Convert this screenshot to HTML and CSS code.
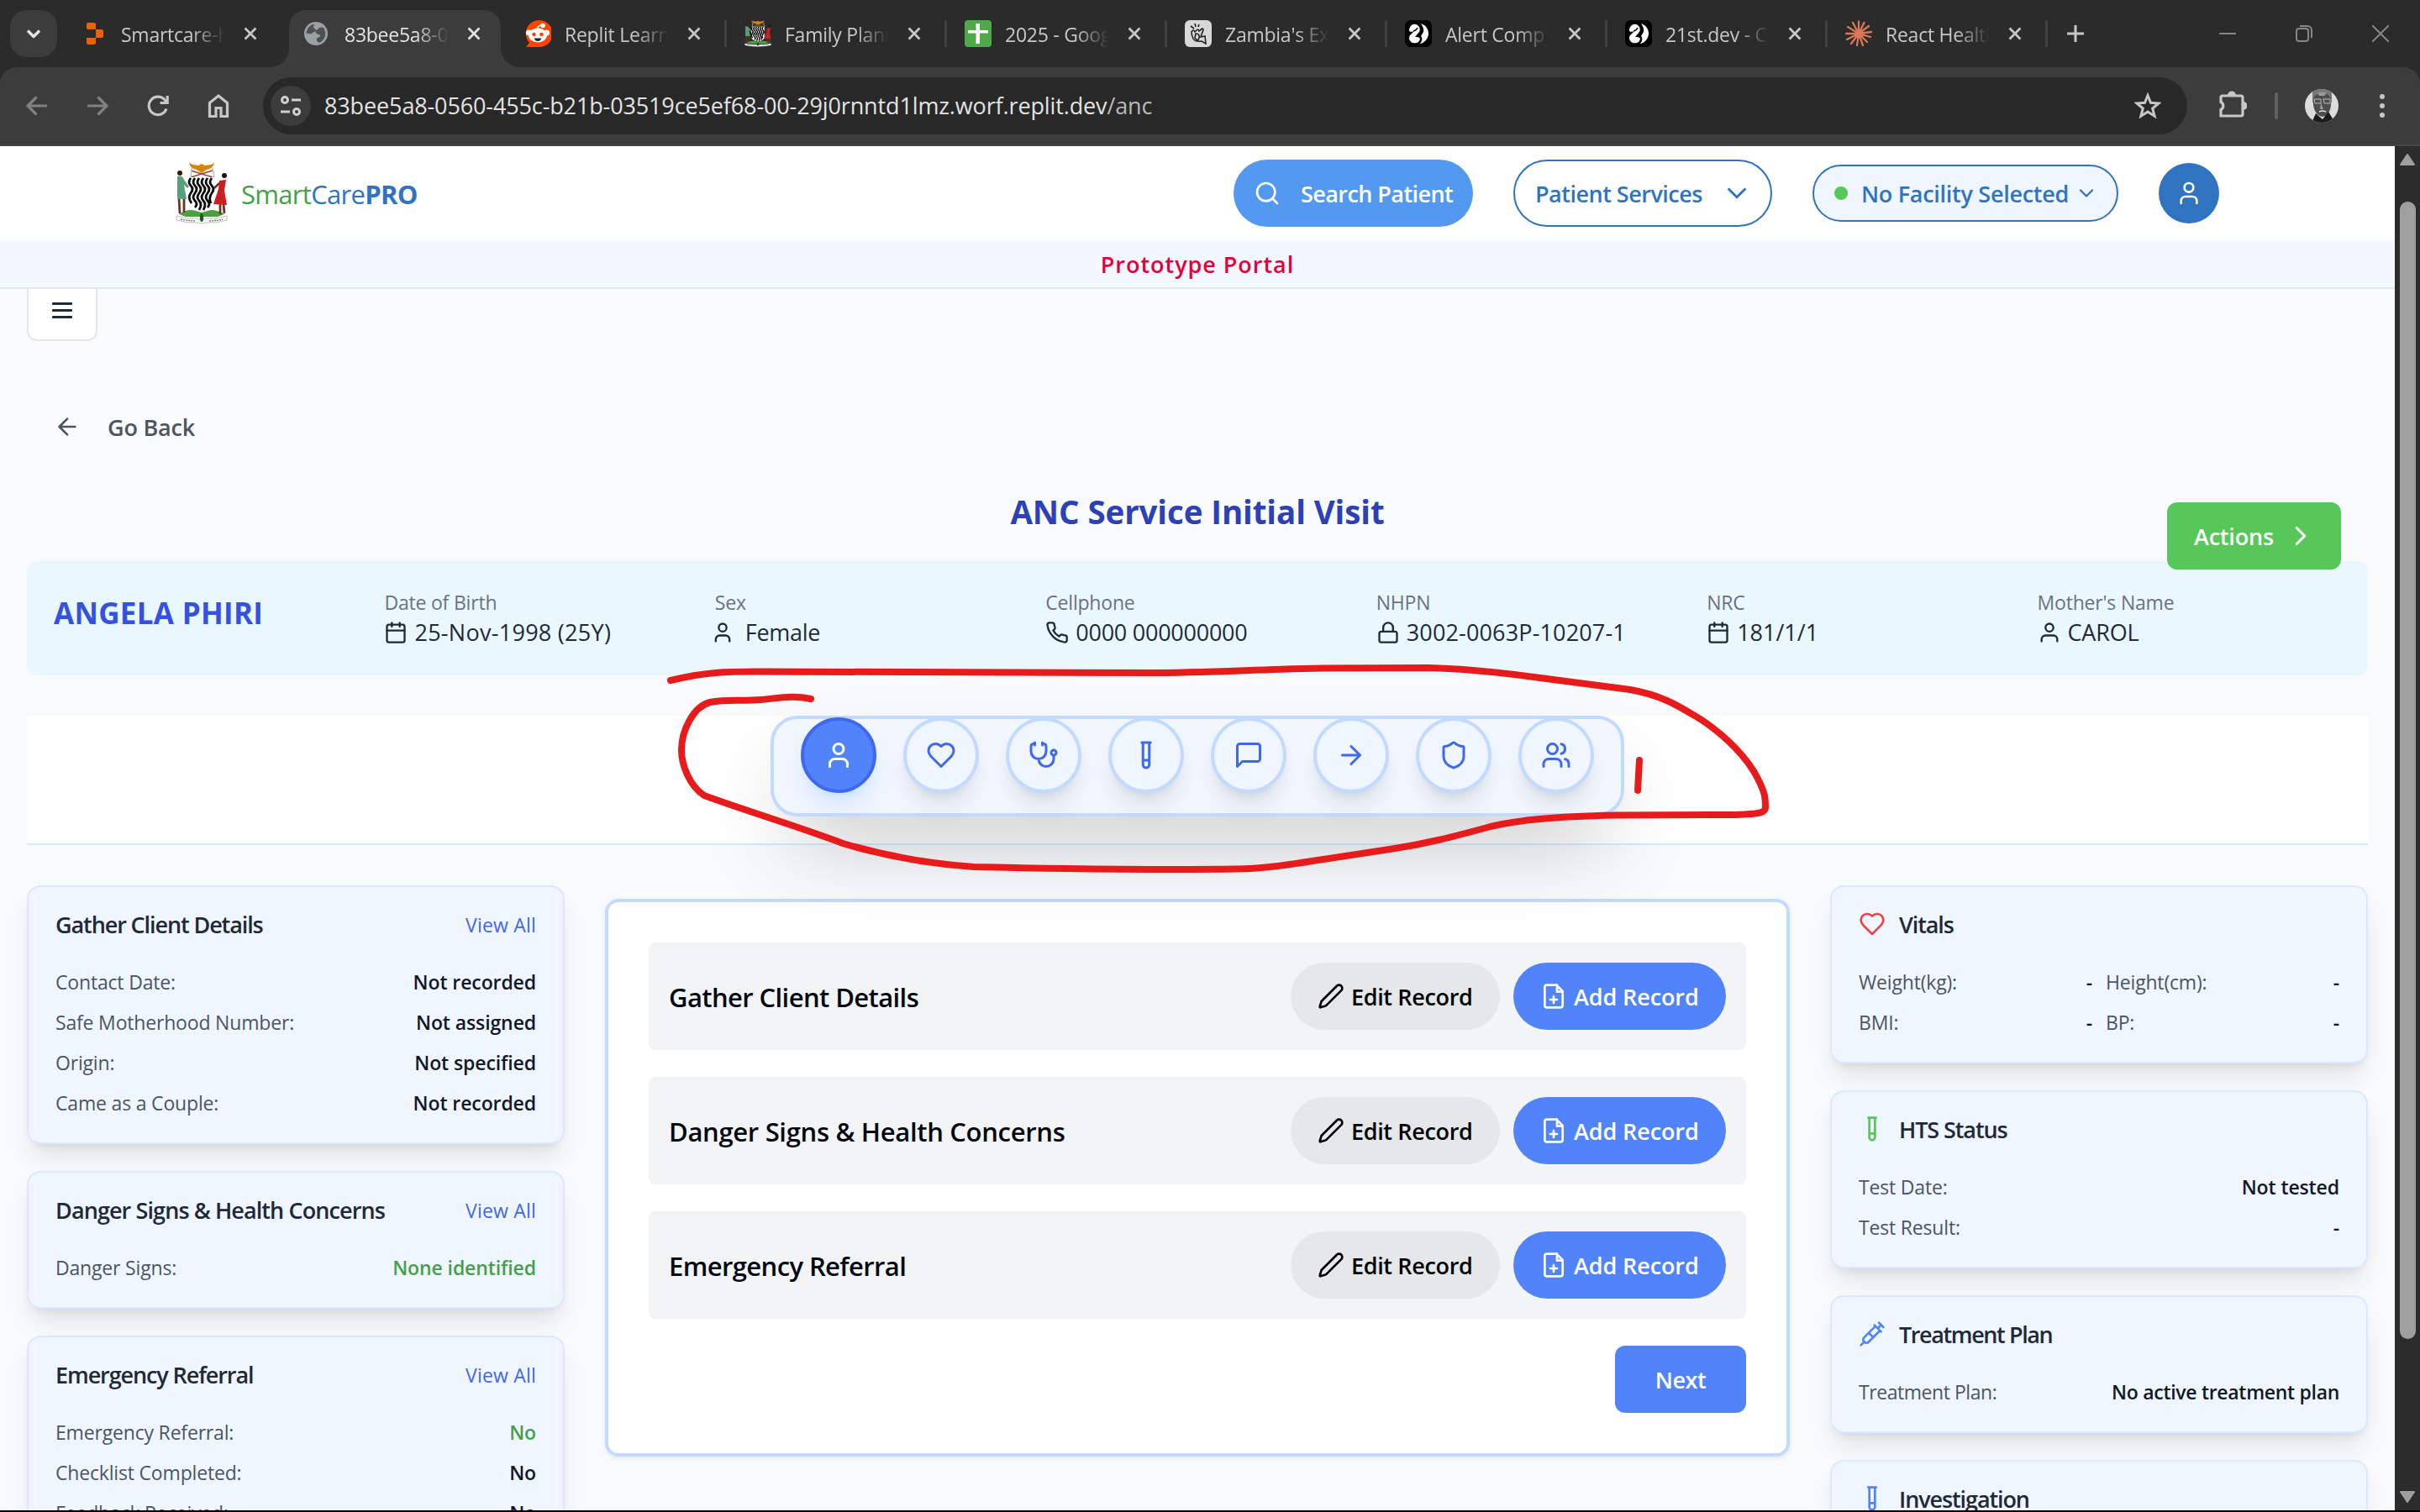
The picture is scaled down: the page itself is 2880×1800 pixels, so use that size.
FILE: index.html
```html
<!DOCTYPE html>
<html lang="en">
<head>
<meta charset="utf-8">
<title>SmartCarePRO – ANC Service</title>
<link rel="stylesheet" href="styles.css">
</head>
<body>
<svg class="defs" width="0" height="0" aria-hidden="true">
  <defs>
    <symbol id="x" viewBox="0 0 24 24"><path d="M5 5l14 14M19 5L5 19"/></symbol>
    <symbol id="user" viewBox="0 0 24 24"><path d="M19 21v-2a4 4 0 0 0-4-4H9a4 4 0 0 0-4 4v2"/><circle cx="12" cy="7" r="4"/></symbol>
    <symbol id="user-wide" viewBox="0 0 24 24"><path d="M20 21v-2a4 4 0 0 0-4-4H8a4 4 0 0 0-4 4v2"/><circle cx="12" cy="7" r="4"/></symbol>
    <symbol id="heart" viewBox="0 0 24 24"><path d="M19 14c1.49-1.46 3-3.21 3-5.5A5.5 5.5 0 0 0 16.5 3c-1.76 0-3 .5-4.5 2-1.5-1.5-2.74-2-4.5-2A5.5 5.5 0 0 0 2 8.5c0 2.3 1.5 4.05 3 5.5l7 7Z"/></symbol>
    <symbol id="stethoscope" viewBox="0 0 24 24"><path d="M11 2v2M5 2v2M5 3H4a2 2 0 0 0-2 2v4a6 6 0 0 0 12 0V5a2 2 0 0 0-2-2h-1M8 15a6 6 0 0 0 12 0v-3"/><circle cx="20" cy="10" r="2"/></symbol>
    <symbol id="tube" viewBox="0 0 24 24"><path d="M14.5 2v17.5c0 1.4-1.1 2.5-2.5 2.5s-2.5-1.1-2.5-2.5V2M8.5 2h7M14.5 16h-5"/></symbol>
    <symbol id="message" viewBox="0 0 24 24"><path d="M21 15a2 2 0 0 1-2 2H7l-4 4V5a2 2 0 0 1 2-2h14a2 2 0 0 1 2 2z"/></symbol>
    <symbol id="arrow-right" viewBox="0 0 24 24"><path d="M5 12h14M12 5l7 7-7 7"/></symbol>
    <symbol id="arrow-left" viewBox="0 0 24 24"><path d="M19 12H5M12 19l-7-7 7-7"/></symbol>
    <symbol id="shield" viewBox="0 0 24 24"><path d="M20 13c0 5-3.5 7.5-7.66 8.95a1 1 0 0 1-.67-.01C7.5 20.5 4 18 4 13V6a1 1 0 0 1 1-1c2 0 4.5-1.2 6.24-2.72a1.17 1.17 0 0 1 1.52 0C14.51 3.81 17 5 19 5a1 1 0 0 1 1 1z"/></symbol>
    <symbol id="users" viewBox="0 0 24 24"><path d="M16 21v-2a4 4 0 0 0-4-4H6a4 4 0 0 0-4 4v2M22 21v-2a4 4 0 0 0-3-3.87M16 3.13a4 4 0 0 1 0 7.75"/><circle cx="9" cy="7" r="4"/></symbol>
    <symbol id="calendar" viewBox="0 0 24 24"><rect x="3" y="4" width="18" height="18" rx="2"/><path d="M8 2v4M16 2v4M3 10h18"/></symbol>
    <symbol id="lock" viewBox="0 0 24 24"><rect x="3" y="11" width="18" height="11" rx="2"/><path d="M7 11V7a5 5 0 0 1 10 0v4"/></symbol>
    <symbol id="phone" viewBox="0 0 24 24"><path d="M22 16.92v3a2 2 0 0 1-2.18 2 19.79 19.79 0 0 1-8.63-3.07 19.5 19.5 0 0 1-6-6 19.79 19.79 0 0 1-3.07-8.67A2 2 0 0 1 4.11 2h3a2 2 0 0 1 2 1.72 12.84 12.84 0 0 0 .7 2.81 2 2 0 0 1-.45 2.11L8.09 9.91a16 16 0 0 0 6 6l1.27-1.27a2 2 0 0 1 2.11-.45 12.84 12.84 0 0 0 2.81.7A2 2 0 0 1 22 16.92z"/></symbol>
    <symbol id="pen" viewBox="0 0 24 24"><path d="M21.174 6.812a1 1 0 0 0-3.986-3.987L3.842 16.174a2 2 0 0 0-.5.83l-1.321 4.352a.5.5 0 0 0 .623.622l4.353-1.32a2 2 0 0 0 .83-.497z"/></symbol>
    <symbol id="file-plus" viewBox="0 0 24 24"><path d="M14.5 2H6a2 2 0 0 0-2 2v16a2 2 0 0 0 2 2h12a2 2 0 0 0 2-2V7.500Z"/><path d="M15 2v6h5M9 15h6M12 12v6"/></symbol>
    <symbol id="syringe" viewBox="0 0 24 24"><path d="m18 2 4 4M17 7l3-3M19 9 8.700 19.300c-1 1-2.500 1-3.400 0l-.6-.6c-1-1-1-2.500 0-3.400L15 5M9 11l4 4M5 19l-3 3M14 4l6 6"/></symbol>
    <symbol id="chevron-down" viewBox="0 0 24 24"><path d="m6 9 6 6 6-6"/></symbol>
    <symbol id="chevron-right" viewBox="0 0 24 24"><path d="m9 18 6-6-6-6"/></symbol>
    <symbol id="search" viewBox="0 0 24 24"><circle cx="11" cy="11" r="8"/><path d="m21 21-4.300-4.300"/></symbol>
    <symbol id="arms" viewBox="0 0 62 74">
      <path d="M16 0c3 4 8 3 11 4l4-2 4 2c4-1 8 0 11-4-1 6-4 8-9 9l-6 4-6-4C20 8 17 6 16 0z" fill="#d9860f"/>
      <path d="M18 10l26 8M44 10l-26 8" stroke="#8a4b3a" stroke-width="1.600"/><path d="M19 7l-1 12M44 7l2 12" stroke="#b9bec6" stroke-width="1.400"/>
      <path d="M16 18h30v28c0 8-8 11-15 13-7-2-15-5-15-13z" fill="#fff"/>
      <path d="M18 19q-4 5 0 9t0 9 1 12M23 19q-4 5 0 9t0 9 0 9 0 8M28 19q-4 5 0 9t0 9 0 9 0 11M33 19q-4 5 0 9t0 9 0 9 0 11M38 19q-4 5 0 9t0 9 0 9 0 8M43 19q-4 5 0 9t0 9-1 12" stroke="#0a0a0a" stroke-width="2.800" fill="none"/>
      <path d="M4 62q10-7 20-4l7 2 7-2q10-3 20 4l-8 3H12z" fill="#4b9f3f"/>
      <circle cx="5" cy="13" r="3" fill="#3a1a12"/><path d="M4 43l1 18M10 43v17" stroke="#6b3526" stroke-width="2.800"/><path d="M2 17q6-2 8 4l6 8-2 2-4-4 3 17H2z" fill="#58a07c"/>
      <circle cx="58" cy="16" r="3" fill="#2a110c"/><path d="M53 50v12M57 50l1 11" stroke="#6b3526" stroke-width="2.800"/><path d="M52 22l8-1-2 13 3 17-16-1 6-18z" fill="#cc1f22"/><path d="M52 25l-6 6" stroke="#6b3526" stroke-width="2.500"/>
      <path d="M1 64q12 4 24 3l6 2 6-2q12 1 24-3v5q-12 4-24 3l-6 1-6-1Q13 73 1 69z" fill="#fafafa" stroke="#999" stroke-width=".6"/>
      <path d="M6 68q10 2 17 2M40 70q8 0 16-2" stroke="#777" stroke-width="1.300" stroke-dasharray="2 1" fill="none"/><ellipse cx="31" cy="66" rx="2.200" ry="5" fill="#1e5a25"/>
    </symbol>
    <symbol id="globe" viewBox="0 0 28 28"><circle cx="14" cy="14" r="14" fill="#9aa0a6"/><path d="M13 2.500c-3 2-2 5 0 6s1 3-1 3.500-3 3-6 2l-3.500-.500A11.500 11.500 0 0 1 13 2.500zM16 9c2-3 5-3 7-2a12 12 0 0 1-5 18c-2-1-4-3-3-5s3-1 4-3-4-2-5-4 0-3 2-4z" fill="#3c3c3c" opacity=".8"/></symbol>
    <symbol id="component" viewBox="0 0 32 32"><rect width="32" height="32" rx="7" fill="#000"/><path d="M5 13C5 7 9 4 13 5s6 6 4 9l-5 6c2 0 5 0 6 2-1 5-5 6-9 5-4-2-5-6-3-9l5-5c-2 1-5 1-6 0zM19 4c6 2 9 7 9 12s-4 11-10 12c3-4 3-7 1-9l3-5c1-3-1-7-3-10z" fill="#fff"/><path d="M10 13q4-1 5-4M18 5q4 5 2 10l-3 4" stroke="#000" stroke-width="1.300" fill="none"/></symbol>
  </defs>
</svg>

<header class="browser">
  <div class="tabstrip">
    <button class="tab-search"><svg class="line"><use href="#chevron-down"/></svg></button>
    <div class="tabs">
      <div class="tab first"><svg class="fav" viewBox="0 0 32 32"><path d="M3 5a2 2 0 0 1 2-2h7a2 2 0 0 1 2 2v6H5a2 2 0 0 1-2-2zM14 11h7a2 2 0 0 1 2 2v6a2 2 0 0 1-2 2h-7zM3 21h11v6a2 2 0 0 1-2 2H5a2 2 0 0 1-2-2z" fill="#ee6006"/></svg><span class="tab-title">Smartcare-h</span><svg class="line close"><use href="#x"/></svg></div>
      <div class="tab active"><svg class="fav globe"><use href="#globe"/></svg><span class="tab-title">83bee5a8-05</span><svg class="line close"><use href="#x"/></svg></div>
      <div class="tab sep"><svg class="fav" viewBox="0 0 32 32"><path d="M2 32l4-5A16 16 0 1 1 16 32z" fill="#ff4500"/><circle cx="5.500" cy="15" r="3.500" fill="#fff"/><circle cx="26.500" cy="15" r="3.500" fill="#fff"/><ellipse cx="16" cy="18" rx="11" ry="8.500" fill="#fff"/><circle cx="22" cy="6.500" r="2.800" fill="#fff"/><path d="M16 10q0-4 5-4" stroke="#fff" stroke-width="1.500" fill="none"/><circle cx="11.500" cy="17" r="2.300" fill="#ff4500"/><circle cx="20.500" cy="17" r="2.300" fill="#ff4500"/><path d="M11.500 21.500h9q-1.500 3.500-4.500 3.500t-4.500-3.500z" fill="#222"/></svg><span class="tab-title">Replit Learn</span><svg class="line close"><use href="#x"/></svg></div>
      <div class="tab sep"><svg class="fav" preserveAspectRatio="none" viewBox="0 0 62 74"><use href="#arms" width="62" height="74"/></svg><span class="tab-title">Family Plann</span><svg class="line close"><use href="#x"/></svg></div>
      <div class="tab sep"><svg class="fav" viewBox="0 0 32 32"><rect width="32" height="32" rx="4" fill="#4fa84a"/><path d="M13.500 4h4.500v24h-4.500zM4 12h24v3.500H4z" fill="#fff"/></svg><span class="tab-title">2025 - Goog</span><svg class="line close"><use href="#x"/></svg></div>
      <div class="tab sep"><svg class="fav" viewBox="0 0 32 32"><rect width="32" height="32" rx="6" fill="#d8d8d8"/><path d="M7 7l4 3M12 4l1 4M17 5l-1 3M8 14q2-4 4 0l2-2q2-2 3 1l4-3q2 1 0 4l-2 6 5-1 1 9-5-3q-8 1-10-3t-2-8zM13 16q5 0 4 5t-5 0z" stroke="#222" stroke-width="1.600" fill="none"/></svg><span class="tab-title">Zambia's Exp</span><svg class="line close"><use href="#x"/></svg></div>
      <div class="tab sep"><svg class="fav"><use href="#component"/></svg><span class="tab-title">Alert Comp</span><svg class="line close"><use href="#x"/></svg></div>
      <div class="tab sep"><svg class="fav"><use href="#component"/></svg><span class="tab-title">21st.dev - C</span><svg class="line close"><use href="#x"/></svg></div>
      <div class="tab sep"><svg class="fav" viewBox="0 0 32 32"><path d="M16 16V1.500M16 16l6.500-13M16 16l12-9M16 16l15-2M16 16l14 4M16 16l10 10M16 16l5 14M16 16l-2 14M16 16L7 28M16 16L2 23M16 16L1 16M16 16L3 8M16 16L9 3" stroke="#d97757" stroke-width="2.300" stroke-linecap="round"/></svg><span class="tab-title">React Health</span><svg class="line close"><use href="#x"/></svg></div>
    </div>
    <svg class="new-tab" viewBox="0 0 22 22"><path d="M11 1v20M1 11h20"/></svg>
    <div class="window-controls">
      <svg viewBox="0 0 20 20"><path d="M0 10h20"/></svg>
      <svg viewBox="0 0 20 20"><rect x="1" y="4" width="14" height="15" rx="3"/><path d="M5 1h9a5 5 0 0 1 5 5v9"/></svg>
      <svg viewBox="0 0 20 20"><path d="M0 0l20 20M20 0L0 20"/></svg>
    </div>
  </div>
  <div class="toolbar">
    <div class="nav-icons">
      <svg class="dim" viewBox="0 0 32 32"><path d="M28 16H5M15.500 5.500L5 16l10.500 10.500"/></svg>
      <svg class="dim" viewBox="0 0 32 32"><path d="M4 16h23M16.500 5.500L27 16 16.500 26.500"/></svg>
      <svg viewBox="0 0 32 32"><path d="M26 19.500A10.700 10.700 0 1 1 24.500 9.500L27 12M27.200 4v8.500h-8.700"/></svg>
      <svg viewBox="0 0 32 32"><path d="M5.500 12.500L16 4l10.500 8.500V28.500h-7.500v-10h-6v10H5.500z"/></svg>
    </div>
    <div class="omnibox">
      <span class="site-info"><svg viewBox="0 0 26 26"><circle cx="6" cy="6" r="3.500"/><path d="M14 6h11M1 20h11"/><circle cx="20" cy="20" r="3.500"/></svg></span>
      <span class="url">83bee5a8-0560-455c-b21b-03519ce5ef68-00-29j0rnntd1lmz.worf.replit.dev<span class="path">/anc</span></span>
      <svg class="star" viewBox="0 0 32 32"><path d="M16 3.500l3.500 8.800 9.500.7-7.300 6 2.400 9.200L16 23l-8.100 5.200L10.300 19 3 13l9.500-.7z"/></svg>
    </div>
    <svg class="ext" viewBox="0 0 34 34"><path d="M3 8a2 2 0 0 1 2-2h22a2 2 0 0 1 2 2v20a2 2 0 0 1-2 2H3v-7.500a5 5 0 0 0 0-9z"/><path d="M12.500 5.500a3.500 3.500 0 0 1 7 0zM29.500 14.500a3.500 3.500 0 0 1 0 7z" fill="#c7c7c7"/></svg>
    <span class="tool-sep"></span>
    <svg class="profile" viewBox="0 0 40 40"><clipPath id="disc"><circle cx="20" cy="20" r="20"/></clipPath><g clip-path="url(#disc)"><path d="M0 0h40v40H0z" fill="#dcdcdc"/><path d="M9 0h23v16H9z" fill="#777"/><path d="M10 13C10 3 30 1 31 13c1 11-3 19-10 20-7-1-12-9-11-20z" fill="#4d4d4d"/><path d="M8 40l5-11 8 7 7-9 8 13z" fill="#1b1b1b"/><path d="M15 5q6-3 11 0l-3 3h-6zM19 16l3 8h-4z" fill="#999"/><path d="M11 12h8v5h-7zM22 12h8v5h-7z" fill="none" stroke="#bbb" stroke-width="1"/><path d="M17 27q4-2 8 0" fill="none" stroke="#ddd" stroke-width="1.500"/></g></svg>
    <svg class="menu" viewBox="0 0 8 28"><circle cx="4" cy="3" r="3"/><circle cx="4" cy="14" r="3"/><circle cx="4" cy="25" r="3"/></svg>
  </div>
</header>

<div class="viewport">
  <div class="page">
    <div class="topbar">
      <svg class="logo"><use href="#arms"/></svg>
      <div class="brand"><span class="green">Smart</span>Care<b>PRO</b></div>
      <button class="btn-search"><svg class="line"><use href="#search"/></svg>Search Patient</button>
      <button class="btn-services">Patient Services<svg class="line"><use href="#chevron-down"/></svg></button>
      <button class="btn-facility"><i></i>No Facility Selected<svg class="line"><use href="#chevron-down"/></svg></button>
      <button class="btn-user"><svg class="line"><use href="#user"/></svg></button>
    </div>
    <div class="banner">Prototype Portal</div>

    <main>
      <button class="hamburger"><i></i><i></i><i></i></button>
      <div class="back"><svg class="line"><use href="#arrow-left"/></svg>Go Back</div>
      <div class="heading">
        <h1>ANC Service Initial Visit</h1>
        <button class="actions">Actions<svg class="line"><use href="#chevron-right"/></svg></button>
      </div>

      <section class="patient">
        <h2>ANGELA PHIRI</h2>
        <dl><dt>Date of Birth</dt><dd class="dob"><svg class="line"><use href="#calendar"/></svg>25-Nov-1998 (25Y)</dd></dl>
        <dl><dt>Sex</dt><dd class="sex"><svg class="line"><use href="#user"/></svg>Female</dd></dl>
        <dl><dt>Cellphone</dt><dd class="cell"><svg class="line"><use href="#phone"/></svg>0000 000000000</dd></dl>
        <dl><dt>NHPN</dt><dd class="nhpn"><svg class="line"><use href="#lock"/></svg>3002-0063P-10207-1</dd></dl>
        <dl><dt>NRC</dt><dd><svg class="line"><use href="#calendar"/></svg>181/1/1</dd></dl>
        <dl><dt>Mother's Name</dt><dd class="mother"><svg class="line"><use href="#user-wide"/></svg>CAROL</dd></dl>
      </section>

      <div class="band">
        <nav class="dock">
          <a class="on"><svg class="line"><use href="#user"/></svg></a>
          <a><svg class="line"><use href="#heart"/></svg></a>
          <a><svg class="line"><use href="#stethoscope"/></svg></a>
          <a><svg class="line"><use href="#tube"/></svg></a>
          <a><svg class="line"><use href="#message"/></svg></a>
          <a><svg class="line"><use href="#arrow-right"/></svg></a>
          <a><svg class="line"><use href="#shield"/></svg></a>
          <a><svg class="line"><use href="#users"/></svg></a>
        </nav>
      </div>

      <div class="columns">
        <div class="side">
          <section class="card">
            <header><h3>Gather Client Details</h3><a>View All</a></header>
            <p><span>Contact Date:</span><b>Not recorded</b></p>
            <p><span>Safe Motherhood Number:</span><b>Not assigned</b></p>
            <p><span>Origin:</span><b>Not specified</b></p>
            <p><span>Came as a Couple:</span><b>Not recorded</b></p>
          </section>
          <section class="card">
            <header><h3 class="long">Danger Signs &amp; Health Concerns</h3><a>View All</a></header>
            <p><span>Danger Signs:</span><b class="ok">None identified</b></p>
          </section>
          <section class="card">
            <header><h3>Emergency Referral</h3><a>View All</a></header>
            <p><span>Emergency Referral:</span><b class="ok">No</b></p>
            <p><span>Checklist Completed:</span><b>No</b></p>
            <p><span>Feedback Received:</span><b>No</b></p>
          </section>
        </div>

        <section class="records">
          <div class="record"><h4 class="snug">Gather Client Details</h4><button class="edit"><svg class="line"><use href="#pen"/></svg>Edit Record</button><button class="add"><svg class="line"><use href="#file-plus"/></svg>Add Record</button></div>
          <div class="record"><h4>Danger Signs &amp; Health Concerns</h4><button class="edit"><svg class="line"><use href="#pen"/></svg>Edit Record</button><button class="add"><svg class="line"><use href="#file-plus"/></svg>Add Record</button></div>
          <div class="record"><h4 class="snug">Emergency Referral</h4><button class="edit"><svg class="line"><use href="#pen"/></svg>Edit Record</button><button class="add"><svg class="line"><use href="#file-plus"/></svg>Add Record</button></div>
          <button class="next">Next</button>
        </section>

        <div class="side">
          <section class="card">
            <header><svg class="line red"><use href="#heart"/></svg><h3>Vitals</h3></header>
            <div class="pairs">
              <p><span>Weight(kg):</span><b>-</b></p><p><span>Height(cm):</span><b>-</b></p>
              <p><span>BMI:</span><b>-</b></p><p><span>BP:</span><b>-</b></p>
            </div>
          </section>
          <section class="card">
            <header><svg class="line green"><use href="#tube"/></svg><h3>HTS Status</h3></header>
            <p><span>Test Date:</span><b>Not tested</b></p>
            <p><span>Test Result:</span><b>-</b></p>
          </section>
          <section class="card">
            <header><svg class="line blue"><use href="#syringe"/></svg><h3 class="plan">Treatment Plan</h3></header>
            <p><span class="plan-label">Treatment Plan:</span><b class="plan-value">No active treatment plan</b></p>
          </section>
          <section class="card">
            <header><svg class="line blue"><use href="#tube"/></svg><h3>Investigation</h3></header>
          </section>
        </div>
      </div>
    </main>
  </div>
  <div class="scrollbar">
    <svg class="up" viewBox="0 0 18 14"><path d="M9 1l8 12H1z"/></svg>
    <div class="thumb"></div>
    <svg class="down" viewBox="0 0 18 14"><path d="M9 13l8-12H1z"/></svg>
  </div>
</div>

<svg class="ink" viewBox="0 0 2880 1800">
  <path d="M798 810C840 800 865 799.500 900 799.500L1365 801C1440 801 1500 796.500 1574 795.500L1700 795C1740 796 1790 801 1833 807L1940 821C1980 828 2000 842 2025 857C2055 877 2080 903 2092 927C2101 945 2101 950 2101 962C2100 970 2083 969 2060 970L1922 970.500C1850 972 1805 976 1770 985C1730 996 1700 1004 1654 1011L1565 1024.500C1530 1030 1500 1034.500 1471 1034.500C1360 1036 1250 1034 1159 1032C1100 1028 1050 1018 1003 1004C950 984 890 966 838 947C820 935 811 910 811 893C811 870 825 841 845 836C865 832 885 835 905 833C935 830 945 828 965 832"/>
  <path d="M1951 905l-2 36"/>
</svg>
</body>
</html>
```
FILE: styles.css
```css
* { box-sizing: border-box; margin: 0; padding: 0; }

body {
  width: 2880px;
  height: 1800px;
  overflow: hidden;
  position: relative;
  background: #000;
  font-family: "Open Sans", "Noto Sans", sans-serif;
}

button { border: 0; font: inherit; letter-spacing: inherit; color: inherit; background: none; }
svg { flex: none; display: block; }
.defs { position: absolute; }
.line { fill: none; stroke: currentColor; stroke-width: 2; stroke-linecap: round; stroke-linejoin: round; }

/* Browser chrome */
.browser { height: 174px; background: #2b2b2b; border-bottom: 2px solid #4a474a; }
.tabstrip { display: flex; height: 80px; padding-left: 12px; align-items: center; }
.tab-search { width: 56px; height: 56px; border-radius: 20px; background: #3c3c3c; color: #e3e3e3; display: grid; place-items: center; margin-right: 14px; }
.tab-search svg { width: 28px; height: 28px; stroke-width: 3; stroke-linecap: butt; }
.tabs { display: flex; gap: 10px; height: 68px; align-self: flex-end; }
.tab { position: relative; display: flex; align-items: center; width: 252px; padding: 0 0 12px 18px; color: #c7c7c7; }
.first .tab-title { margin-left: 12px; }
.fav { width: 32px; height: 32px; }
.globe { width: 28px; height: 28px; margin-right: 4px; }
.tab-title {
  width: 122px; margin-left: 16px; overflow: hidden; white-space: nowrap;
  font-size: 23px; line-height: 32px; letter-spacing: -.25px; padding-top: 1px;
  mask-image: linear-gradient(90deg, #000 84px, transparent 124px);
}
.close { width: 22px; height: 22px; margin-left: 21px; stroke-width: 3; stroke-linecap: butt; }
.active { background: #3c3c3c; border-radius: 20px 20px 0 0; color: #e3e3e3; }
.active::before, .active::after { content: ""; position: absolute; bottom: 0; width: 22px; height: 22px; }
.active::before { left: -22px; background: radial-gradient(circle at 0 0, transparent 21.500px, #3c3c3c 22px); }
.active::after { right: -22px; background: radial-gradient(circle at 100% 0, transparent 21.500px, #3c3c3c 22px); }
.sep::after { content: ""; position: absolute; left: 256px; top: 12px; width: 3px; height: 32px; border-radius: 2px; background: #424242; }
.new-tab { width: 22px; height: 22px; margin-left: 29px; stroke: #c7c7c7; stroke-width: 3; }
.window-controls { display: flex; gap: 71px; margin-left: 160px; }
.window-controls svg { width: 20px; height: 20px; fill: none; stroke: #868686; stroke-width: 2; }

.toolbar { display: flex; align-items: center; height: 92px; padding-left: 28px; background: #3c3c3c; border-radius: 20px 20px 0 0; }
.nav-icons { display: flex; gap: 40px; width: 285px; }
.nav-icons svg { width: 32px; height: 32px; fill: none; stroke: #c7c7c7; stroke-width: 3.200; }
.nav-icons .dim { stroke: #818181; }
.omnibox { display: flex; align-items: center; width: 2290px; height: 68px; padding: 0 31px 0 9px; border-radius: 34px; background: #282828; }
.site-info { display: grid; place-items: center; width: 48px; height: 48px; border-radius: 50%; background: #3c3c3c; margin-right: 16px; }
.site-info svg { width: 26px; height: 26px; fill: none; stroke: #d0d0d0; stroke-width: 3; }
.url { flex: 1; font-size: 27px; line-height: 40px; letter-spacing: -.13px; color: #e3e3e3; }
.path { color: #b9b9b9; }
.star { width: 32px; height: 32px; fill: none; stroke: #c7c7c7; stroke-width: 3; }
.ext { width: 34px; height: 34px; margin: -2px 0 0 37px; fill: none; stroke: #c7c7c7; stroke-width: 3.200; }
.tool-sep { width: 4px; height: 32px; border-radius: 2px; margin: 0 32px 0 33px; background: #606060; }
.profile { width: 40px; height: 40px; }
.menu { width: 8px; height: 28px; margin-left: 48px; fill: #c7c7c7; }

/* Page */
.viewport { display: flex; height: 1624px; }
.page { width: 2850px; overflow: hidden; background: #f9fafc; }
.scrollbar { position: relative; width: 30px; background: #2c2c2c; }
.thumb { width: 19px; height: 1354px; margin: 43px 0 0 6px; border-radius: 10px; background: #9f9f9f; }
.scrollbar svg { width: 18px; height: 14px; margin-left: 6px; fill: #9f9f9f; stroke: #9f9f9f; stroke-width: 2; stroke-linejoin: round; }
.scrollbar .up { margin-top: 9px; }
.scrollbar .down { margin-top: 181px; }

.topbar { display: flex; align-items: center; height: 112px; padding: 0 209px; background: #fff; font-size: 27px; font-weight: 600; color: #3073c0; }
.logo { width: 62px; height: 74px; }
.brand { margin-left: 16px; width: 1181px; padding-top: 1px; font-size: 31px; font-weight: 400; letter-spacing: -.7px; }
.green { color: #45a049; }
.btn-search { display: flex; align-items: center; width: 285px; height: 80px; padding-left: 24px; border-radius: 40px; background: #5399ef; color: #fff; letter-spacing: -.57px; }
.btn-search svg { width: 32px; height: 32px; margin-right: 24px; }
.btn-services { display: flex; align-items: center; width: 308px; height: 80px; margin-left: 48px; padding-left: 24px; border: 2px solid #3073c0; border-radius: 40px; letter-spacing: -.5px; }
.btn-services svg { width: 38px; height: 38px; margin-left: 22px; stroke-width: 1.800; }
.btn-facility { display: flex; align-items: center; width: 364px; height: 68px; margin-left: 48px; padding-left: 24px; border: 2px solid #3073c0; border-radius: 34px; background: #eff6ff; letter-spacing: -.29px; }
.btn-facility i { width: 16px; height: 16px; margin-right: 16px; border-radius: 50%; background: #56c758; }
.btn-facility svg { width: 28px; height: 28px; margin-left: 7px; }
.btn-user { display: grid; place-items: center; width: 72px; height: 72px; margin-left: 48px; border-radius: 50%; background: #3073c0; color: #fff; }
.btn-user svg { width: 32px; height: 32px; }

.banner { height: 58px; border-bottom: 2px solid #e5e7eb; background: #f3f8ff; text-align: center; font-size: 27px; line-height: 57px; font-weight: 600; letter-spacing: .96px; color: #e3003c; }

main { padding: 0 32px; }
.hamburger { display: flex; flex-direction: column; align-items: center; gap: 5px; width: 84px; height: 62px; padding-top: 16px; border: 2px solid #e5e7eb; border-top: 0; border-radius: 0 0 12px 12px; background: #fff; }
.hamburger i { width: 24px; height: 3px; border-radius: 1px; background: #1f2937; }
.back { display: flex; align-items: center; gap: 32px; height: 56px; margin-top: 74px; padding-left: 32px; font-size: 27px; font-weight: 600; letter-spacing: -.2px; color: #4b5563; }
.back svg { width: 32px; height: 32px; }
.heading { position: relative; margin-top: 44px; }
h1 { text-align: center; font-size: 38.500px; line-height: 58px; font-weight: 700; letter-spacing: -.1px; color: #2b41b5; }
.actions { position: absolute; top: 18px; right: 32px; display: flex; align-items: center; width: 207px; height: 80px; padding-left: 32px; border-radius: 12px; background: #56c758; color: #fff; font-size: 27px; font-weight: 600; letter-spacing: -.2px; }
.actions svg { width: 38px; height: 38px; margin-left: 13px; }

.patient { display: grid; grid-template-columns: repeat(7, 1fr); height: 136px; margin-top: 30px; padding: 32px 0 0 32px; border-radius: 12px; background: #e9f7ff; }
h2 { font-size: 35px; line-height: 59px; font-weight: 700; letter-spacing: .3px; color: #3451e0; }
dt { font-size: 23px; line-height: 32px; padding-top: 1px; letter-spacing: -.2px; color: #6b7280; }
dd { display: flex; align-items: center; gap: 8px; font-size: 27px; line-height: 40px; color: #1f2937; }
dd svg { width: 28px; height: 28px; }
.dob { letter-spacing: .28px; }
.nhpn { letter-spacing: .15px; }
.sex { letter-spacing: -.3px; }
.sex svg { margin: 0 5px 0 -5px; }
.cell { letter-spacing: -.25px; }
.mother { letter-spacing: -.2px; }

.band { height: 154px; margin-top: 48px; display: flex; justify-content: center; align-items: flex-start; border-bottom: 2px solid #dbe8ff; background: #fff; }
.dock { position: relative; z-index: 1; display: flex; gap: 32px; width: 1016px; height: 120px; padding: 0 32px; border: 4px solid #c3daff; border-radius: 32px; background: #f1f6ff; box-shadow: 0 50px 100px -24px rgba(0, 0, 0, .25); }
.dock a { display: grid; place-items: center; width: 90px; height: 90px; margin-top: -2px; border: 4px solid #c3daff; border-radius: 50%; background: #eff6ff; color: #3f68f0; box-shadow: 0 20px 30px -6px rgba(0, 0, 0, .1), 0 8px 12px -8px rgba(0, 0, 0, .1); }
.dock svg { width: 36px; height: 36px; }
.dock .on { border-color: #3f68f0; background: #5184fb; color: #fff; box-shadow: 0 20px 30px -6px rgba(81, 162, 255, .2), 0 8px 12px -8px rgba(81, 162, 255, .2); }

.columns { display: grid; grid-template-columns: 640px 1410px 640px; gap: 48px; margin-top: 48px; align-items: start; }
.side { display: grid; gap: 32px; }
.card { padding: 24px 32px 31px; border: 2px solid #dbe8ff; border-radius: 16px; background: #eff6ff; box-shadow: 0 20px 30px -6px rgba(0, 0, 0, .1), 0 8px 12px -8px rgba(0, 0, 0, .1); }
.card header { display: flex; align-items: center; height: 40px; margin-bottom: 33px; }
.card header svg { width: 32px; height: 32px; margin-right: 16px; }
h3 { flex: 1; padding-top: 2px; font-size: 27px; line-height: 40px; font-weight: 600; letter-spacing: -1.100px; color: #1f2937; }
.long { letter-spacing: -.9px; }
.plan { letter-spacing: -1.400px; }
.card a { padding-top: 2px; font-size: 23px; letter-spacing: .2px; color: #4166ee; }
.card p { display: flex; justify-content: space-between; height: 32px; font-size: 23px; line-height: 32px; letter-spacing: -.18px; color: #4b5563; }
.card p + p { margin-top: 16px; }
.card b { font-weight: 600; letter-spacing: -.1px; color: #111827; }
.card b.ok { color: #45a049; }
.plan-label { letter-spacing: -.45px; }
.card .plan-value { letter-spacing: -.3px; }
.pairs { display: grid; grid-template-columns: 1fr 1fr; gap: 16px; }
.card .pairs p { margin: 0; }
.red { color: #e84343; }
.line.green { color: #56c758; }
.blue { color: #5184fb; }

.records { display: flex; flex-direction: column; gap: 32px; margin-top: 16px; padding: 48px; border: 4px solid #c3daff; border-radius: 16px; background: #fff; box-shadow: 0 2px 6px rgba(0, 0, 0, .08); font-size: 27px; font-weight: 600; }
.record { display: flex; align-items: center; gap: 16px; height: 128px; padding: 0 24px; border-radius: 8px; background: #f3f4f6; }
h4 { flex: 1; padding-top: 2px; font-size: 31px; font-weight: 600; letter-spacing: -.32px; color: #030712; }
.snug { letter-spacing: -.6px; }
.record button { display: flex; align-items: center; gap: 8px; height: 80px; padding-left: 32px; border-radius: 40px; white-space: nowrap; }
.record svg { width: 32px; height: 32px; }
.edit { width: 249px; background: #e5e7eb; color: #000; letter-spacing: -.35px; }
.add { width: 253px; background: #5184fb; color: #fff; letter-spacing: -.1px; }
.next { align-self: flex-end; width: 156px; height: 80px; border-radius: 12px; background: #5184fb; color: #fff; letter-spacing: -.5px; }

/* Freehand pen annotation over the page */
.ink { position: absolute; inset: 0; width: 2880px; height: 1800px; fill: none; stroke: #e71b1b; stroke-width: 8; stroke-linecap: round; stroke-linejoin: round; z-index: 5; }
```
